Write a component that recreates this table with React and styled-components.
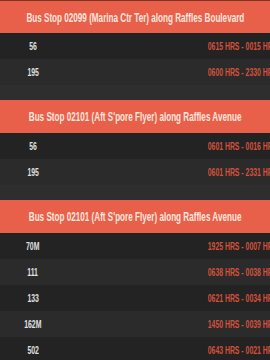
import React from 'react';
import styled, { createGlobalStyle } from 'styled-components';

const stops = [
  {
    title: 'Bus Stop 02099 (Marina Ctr Ter) along Raffles Boulevard',
    buses: [
      ['56', '0615 HRS - 0015 HRS'],
      ['195', '0600 HRS - 2330 HRS'],
    ],
  },
  {
    title: "Bus Stop 02101 (Aft S'pore Flyer) along Raffles Avenue",
    buses: [
      ['56', '0601 HRS - 0016 HRS'],
      ['195', '0601 HRS - 2331 HRS'],
    ],
  },
  {
    title: "Bus Stop 02101 (Aft S'pore Flyer) along Raffles Avenue",
    buses: [
      ['70M', '1925 HRS - 0007 HRS'],
      ['111', '0638 HRS - 0038 HRS'],
      ['133', '0621 HRS - 0034 HRS'],
      ['162M', '1450 HRS - 0039 HRS'],
      ['502', '0643 HRS - 0021 HRS'],
    ],
  },
];

const GlobalStyle = createGlobalStyle`
  html, body {
    margin: 0;
    padding: 0;
    background: #2e2e2e;
    overflow: hidden;
  }
  body {
    font-family: "Liberation Sans", Arial, sans-serif;
  }
`;

const App = () => (
  <Page>
    <GlobalStyle />
    {stops.map((stop, i) => (
      <Section key={i} first={i === 0}>
        <Header first={i === 0}>
          <Narrow origin="center">{stop.title}</Narrow>
        </Header>
        {stop.buses.map(([service, hours], j) => (
          <Row key={service} odd={j % 2 === 1}>
            <Service>
              <Narrow origin="center">{service}</Narrow>
            </Service>
            <Hours>
              <Narrow origin="right">{hours}</Narrow>
            </Hours>
          </Row>
        ))}
      </Section>
    ))}
  </Page>
);

const Page = styled.div`
  width: 270px;
  height: 360px;
  overflow: hidden;
  border-top: 1px solid #7a3527;
`;

const Section = styled.div`
  margin-top: ${p => (p.first ? '0' : '15px')};
`;

/* condensed look: no narrow family installed, so squeeze the glyphs */
const Narrow = styled.span`
  display: inline-block;
  white-space: nowrap;
  transform: scaleX(0.625);
  transform-origin: ${p => p.origin};
`;

const Header = styled.div`
  background: #e8604a;
  color: #fbe6de;
  height: ${p => (p.first ? '32px' : '33px')};
  display: flex;
  align-items: center;
  justify-content: center;
  font-size: 13px;
  font-weight: bold;
  white-space: nowrap;
`;

const Row = styled.div`
  display: flex;
  align-items: center;
  height: 26px;
  background: ${p => (p.odd ? '#2b2b2b' : '#232323')};
  font-size: 11px;
  font-weight: bold;
`;

const Service = styled.div`
  width: 66px;
  display: flex;
  justify-content: center;
  color: #e0e0e0;
`;

const Hours = styled.div`
  flex: 1;
  display: flex;
  justify-content: flex-end;
  margin-right: -7px;
  color: #d4513c;
`;

export default App;
